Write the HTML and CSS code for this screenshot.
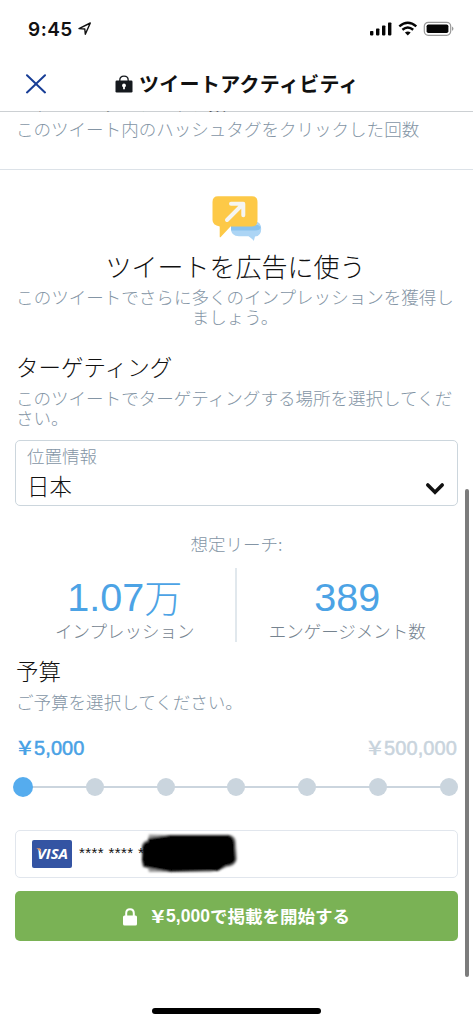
FILE: index.html
```html
<!DOCTYPE html>
<html lang="ja">
<head>
<meta charset="utf-8">
<title>ツイートアクティビティ</title>
<link rel="stylesheet" href="styles.css">
</head>
<body>
<div class="screen">
  <div class="status">
    <span class="time">9:45</span>
    <svg class="locate" width="14" height="14" viewBox="0 0 14 14"><path d="M1 6.6 12.3 1 7.3 12.3 6.8 7Z" fill="none" stroke="#111" stroke-width="1.4" stroke-linejoin="round"/></svg>
    <svg class="signals" width="86" height="16" viewBox="0 0 86 16">
      <g fill="#050505">
        <rect x="1" y="10" width="3.4" height="4.4" rx=".8"/><rect x="7" y="7.4" width="3.4" height="7" rx=".8"/><rect x="13" y="4.4" width="3.4" height="10" rx=".8"/><rect x="19" y="1.4" width="3.4" height="13" rx=".8"/>
        <path d="M38.8 14.4 35.9 11.6Q38.8 9.5 41.7 11.6Z"/>
      </g>
      <path d="M30.3 5.4Q38.8-1.7 47.3 5.4M33.4 8.8Q38.8 4.4 44.2 8.8" fill="none" stroke="#050505" stroke-width="2.4"/>
      <rect x="55.3" y="1.3" width="26.4" height="13" rx="4" fill="none" stroke="#999" stroke-width="1.2"/>
      <rect x="57.6" y="3.5" width="21.8" height="8.6" rx="1.8" fill="#050505"/>
      <path d="M83 5.6Q86 7.8 83 10Z" fill="#999"/>
    </svg>
  </div>
  <header class="nav">
    <svg class="close" width="22" height="20" viewBox="0 0 22 20"><path d="M2 1.3 20 18.4M20 1.3 2 18.4" stroke="#183e96" stroke-width="2" stroke-linecap="round"/></svg>
    <svg class="nav-lock" width="18" height="18" viewBox="0 0 18 18"><path d="M4.8 6.5V5.2Q4.8 1.2 9 1.2T13.2 5.2V6.5" fill="none" stroke="#15191e" stroke-width="1.3"/><rect x=".5" y="5.6" width="17" height="11.8" rx="1.2" fill="#15191e"/><circle cx="9" cy="10.4" r="1.9" fill="#fff"/><path d="M8.1 11h1.8v3.2H8.1z" fill="#fff"/></svg>
    <h1 class="title">ツイートアクティビティ</h1>
  </header>
  <main class="content">
    <div class="peek"><span>ハッシュタグのクリック数</span></div>
    <p class="note note-top">このツイート内のハッシュタグをクリックした回数</p>
    <section class="intro">
      <svg width="50" height="47" viewBox="0 0 50 47">
        <path d="M26 26H43Q49.2 27 49.2 34T43 41.6L41.8 46Q41 44.3 36.5 41.3H27Q19 41 19 34Z" fill="#acd5f5"/>
        <path d="M19 30H46L48.7 32Q48.5 35.5 43 35.5H19Z" fill="#8ac3ee"/>
        <path d="M6 1.2H40Q45.5 1.2 45.5 7V25Q45.5 31.5 40 31.5H18.5L8.5 42.2Q7.7 42.7 7.7 41.5V31.5Q.5 30 .5 25V7Q.5 1.2 6 1.2Z" fill="#fdc947"/>
        <path d="M15 25 31 9M19 8.8H31.3V20.2" fill="none" stroke="#f5f5f2" stroke-width="4" stroke-linecap="round" stroke-linejoin="round"/>
      </svg>
      <h2 class="headline">ツイートを広告に使う</h2>
      <p class="note note-center">このツイートでさらに多くのインプレッションを獲得し<br>ましょう。</p>
    </section>
    <section class="targeting">
      <h3 class="subhead">ターゲティング</h3>
      <p class="note">このツイートでターゲティングする場所を選択してくだ<br>さい。</p>
      <div class="select">
        <div class="select-text"><span class="select-label">位置情報</span><span class="select-value">日本</span></div>
        <svg width="20" height="14" viewBox="0 0 20 14"><path d="M2.8 3 10 10.3 17.2 3" fill="none" stroke="#111" stroke-width="3.6" stroke-linecap="round"/></svg>
      </div>
    </section>
    <section class="reach">
      <p class="note reach-title">想定リーチ:</p>
      <div class="stats">
        <div class="stat"><strong>1.07<span class="man">万</span></strong><span class="stat-label">インプレッション</span></div>
        <div class="stat"><strong>389</strong><span class="stat-label">エンゲージメント数</span></div>
      </div>
    </section>
    <section class="budget">
      <h3 class="subhead">予算</h3>
      <p class="note">ご予算を選択してください。</p>
      <div class="prices"><span class="price active"><span class="yen">¥</span>5,000</span><span class="price"><span class="yen">¥</span>500,000</span></div>
      <div class="slider"><i class="dot on"></i><i class="dot"></i><i class="dot"></i><i class="dot"></i><i class="dot"></i><i class="dot"></i><i class="dot"></i></div>
    </section>
    <div class="card">
      <span class="visa"><svg width="40" height="28" viewBox="0 0 40 28"><text x="5" y="19.3" textLength="31" lengthAdjust="spacingAndGlyphs" class="visa-text">VISA</text><path d="M4.3 8.2H8.2L9.6 13.6Q8 9.9 4.3 8.2Z" fill="#e99a63"/></svg></span>
      <span class="number">**** **** *</span>
      <svg class="redaction" width="102" height="44" viewBox="0 0 102 44">
        <defs><filter id="soft" x="-10%" y="-15%" width="120%" height="130%"><feGaussianBlur stdDeviation="1"/></filter></defs>
        <g filter="url(#soft)"><path d="M9 2.5 30 3 90 3Q96 4 96 11L97 27Q96 34 87 35L79 38 70 40 9 40 8 36 3 35Q1 29 3 24L2 13Q3 9 8 8Z" fill="#999"/><path d="M9 7 30 4 89 4Q94 6 94 12L95 28Q93 33 86 33L78 38 30 39 14 36 4 34Q2 28 3 23L3 14Q5 10 9 10Z" fill="#000" stroke="#000" stroke-width="1.5"/></g>
      </svg>
    </div>
    <button class="submit">
      <svg width="14" height="18" viewBox="0 0 14 18"><path d="M3.2 8V5.2Q3.2 1.2 7 1.2T10.8 5.2V8" fill="none" stroke="#fff" stroke-width="2"/><rect y="7.4" width="14" height="10.2" rx="1.5" fill="#fff"/></svg>
      <span class="submit-text"><span class="yen">¥</span><span class="latin">5,000</span>で掲載を開始する</span>
    </button>
  </main>
  <div class="scrollbar"></div>
  <div class="home"></div>
</div>
</body>
</html>
```
FILE: styles.css
```css
* { box-sizing: border-box; }
body, h1, h2, h3, p { margin: 0; }
body { background: #fff; font-family: "Noto Sans CJK JP", sans-serif; color: #111; }
svg { display: block; flex: none; }
.screen { position: relative; width: 473px; height: 1024px; overflow: hidden; white-space: nowrap; }
.status { display: flex; align-items: center; height: 58px; padding: 0 18px 0 28px; }
.time { font: 600 19px/24px Inter, sans-serif; letter-spacing: .5px; width: 50px; padding-top: 1px; }
.signals { margin-left: auto; }
.nav { display: flex; align-items: center; height: 54px; padding: 0 25px 2px; border-bottom: 1px solid #ccd0d3; }
.close { margin-right: 68px; }
.nav-lock { margin-right: 6px; }
.title { font-size: 20px; line-height: 28px; font-weight: 700; letter-spacing: .3px; }
.peek { height: 3px; margin: -1px 0 0; overflow: hidden; display: flex; align-items: flex-end; padding-left: 16px; font-size: 17.5px; line-height: 22px; }
.note { font-size: 17.55px; line-height: 20px; font-weight: 300; color: #8495a5; }
.note-top { padding: 5px 16px 30px; border-bottom: 1px solid #dce2e8; }
.intro { display: flex; flex-direction: column; align-items: center; padding-top: 25px; }
.headline { margin: 6px 2px 0 0; font-size: 26px; line-height: 36px; font-weight: 300; }
.note-center { margin: 3px 3px 0 0; text-align: center; line-height: 19.5px; }
.targeting { padding: 25px 16px 0; }
.subhead { margin-bottom: 7px; font-size: 22.5px; line-height: 30px; font-weight: 300; }
.select { display: flex; align-items: flex-end; justify-content: space-between; height: 66px; margin: 12px -1px 0; padding: 0 12px 9px 11px; border: 1px solid #ccd6dd; border-radius: 5px; }
.select-text { display: flex; flex-direction: column; align-self: flex-start; padding-top: 5px; }
.select-label { font-size: 17.5px; line-height: 20px; font-weight: 300; color: #8495a5; }
.select-value { margin-top: 4px; font-size: 22.4px; line-height: 30px; font-weight: 300; }
.reach { padding-top: 28px; }
.reach-title { text-align: center; }
.stats { display: grid; grid-template-columns: 1fr 1fr; height: 74px; margin: 14px 15px 0; }
.stat { display: flex; flex-direction: column; align-items: center; padding-top: 7px; }
.stat:first-child { border-right: 2px solid #e1e8ed; }
.stat strong { display: flex; align-items: center; height: 44px; font: 400 39.5px/44px "Liberation Sans", "Noto Sans CJK JP", sans-serif; color: #4ca3e5; }
.man { font: 300 38px/44px "Noto Sans CJK JP", sans-serif; margin-top: -3px; }
.stat-label { margin-top: 2px; font-size: 17.5px; line-height: 20px; font-weight: 300; color: #75838f; }
.budget { padding: 13px 16px 0; }
.prices { display: flex; justify-content: space-between; margin-top: 26px; }
.price { display: flex; align-items: center; height: 20px; font: 400 20px/20px "Liberation Sans", sans-serif; letter-spacing: .1px; -webkit-text-stroke: .5px; color: #c9d4dd; }
.price.active { color: #4aa2e5; }
.yen { width: 18px; font-family: "Noto Sans CJK JP", sans-serif; font-size: 20px; font-weight: 500; display: inline-flex; justify-content: center; transform: translateY(-1px) scaleX(1.25); -webkit-text-stroke: 0; }
.slider { display: flex; align-items: center; justify-content: space-between; height: 20px; margin: 19px -1px 0 -3px; background: linear-gradient(#cbd5de, #cbd5de) center / calc(100% - 18px) 2px no-repeat; }
.dot { width: 18px; height: 18px; border-radius: 50%; background: #cad5de; }
.dot.on { width: 20px; height: 20px; background: #55acee; }
.card { display: flex; align-items: center; height: 48px; margin: 33px 15px 0; padding-left: 16px; border: 1px solid #e1e6ed; border-radius: 5px; }
.visa { width: 40px; height: 28px; border-radius: 2px; background: #3454a3; }
.visa-text { font: italic 700 15px "Open Sans", sans-serif; fill: #fff; }
.number { width: 66px; margin-left: 7px; padding-bottom: 2px; font: 400 15px/20px "Liberation Sans", sans-serif; letter-spacing: .4px; }
.redaction { margin-left: -5px; }
.submit { display: flex; align-items: center; justify-content: center; gap: 13px; width: 443px; height: 50px; margin: 13px 15px 0; padding: 0 0 1px; border: 0; border-radius: 5px; background: #7ab255; color: #fff; }
.submit svg { margin-top: 3px; }
.submit-text { display: flex; align-items: center; font: 700 17.5px/26px "Noto Sans CJK JP", sans-serif; }
.submit .yen { width: 16px; font-size: 18px; font-weight: 700; }
.latin { font: 700 17.5px/26px "Liberation Sans", sans-serif; }
.scrollbar { position: absolute; right: 4px; top: 489px; width: 4px; height: 488px; border-radius: 2px; background: #7c7c7c; }
.home { position: absolute; left: 152px; top: 1008px; width: 169px; height: 6px; border-radius: 3px; background: #000; }
```
